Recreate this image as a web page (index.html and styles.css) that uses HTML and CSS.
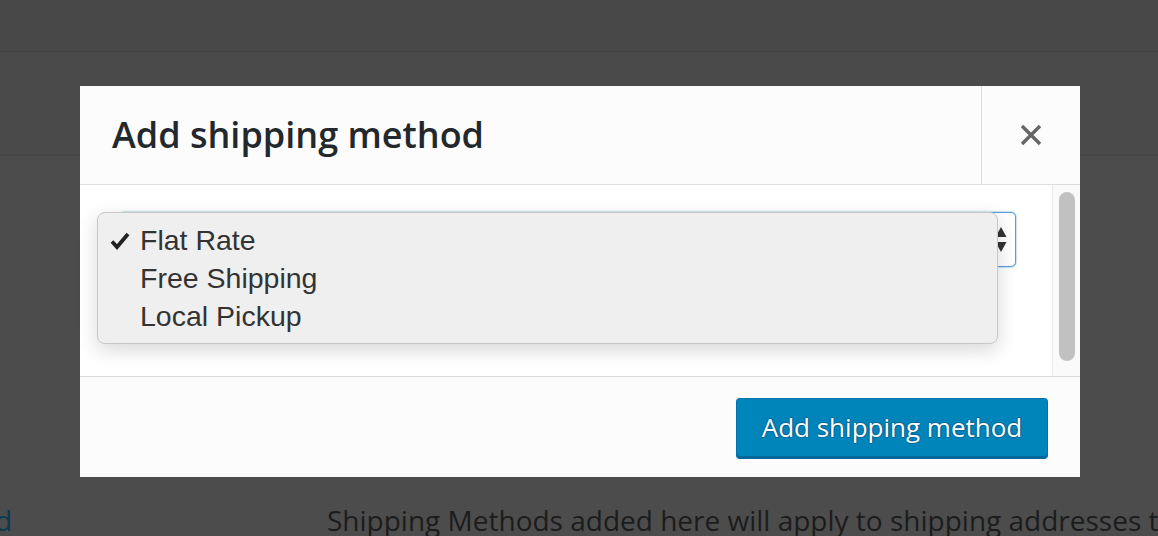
FILE: index.html
```html
<!DOCTYPE html>
<html>
<head>
<meta charset="utf-8">
<link rel="stylesheet" href="styles.css">
</head>
<body>
<div class="page">
  <div class="topbar"></div>
  <div class="subbar"></div>
  <div class="content">
    <a class="link">d</a>
    <p class="desc">Shipping Methods added here will apply to shipping addresses t</p>
  </div>
</div>

<div class="modal">
  <header class="modal-head">
    <h1 class="modal-title">Add shipping method</h1>
    <button class="modal-close" aria-label="Close">
      <svg width="24" height="24" viewBox="0 0 24 24"><path d="M3 3 L21 21 M21 3 L3 21" stroke="#666" stroke-width="3.4" fill="none"/></svg>
    </button>
  </header>
  <div class="modal-body">
    <div class="body-inner">
      <div class="select">
        <span class="arrows">
          <svg width="12" height="28" viewBox="0 0 12 28"><path d="M6 1 L11.5 11 L0.5 11 Z M0.5 16 L11.5 16 L6 26 Z" fill="#333"/></svg>
        </span>
      </div>
      <ul class="dropdown">
        <li class="opt checked"><span class="check"><svg width="20" height="18" viewBox="0 0 20 18"><path d="M2 9.5 L7 15 L18 2" stroke="#222" stroke-width="3.8" fill="none" stroke-linejoin="miter"/></svg></span>Flat Rate</li>
        <li class="opt">Free Shipping</li>
        <li class="opt">Local Pickup</li>
      </ul>
    </div>
    <div class="scrolltrack"><div class="thumb"></div></div>
  </div>
  <footer class="modal-foot">
    <button class="btn-primary">Add shipping method</button>
  </footer>
</div>
</body>
</html>
```
FILE: styles.css
```css
html, body {
  margin: 0;
  padding: 0;
}
body {
  background: #4c4c4c;
  width: 1158px;
  height: 536px;
  overflow: hidden;
  font-family: "Open Sans", "Liberation Sans", sans-serif;
}
.page {
  display: flex;
  flex-direction: column;
}
.topbar {
  height: 51px;
  background: #484848;
  border-bottom: 1px solid #434343;
}
.subbar {
  height: 102px;
  background: #4a4a4a;
  border-bottom: 2px solid #464646;
}
.content {
  display: flex;
  align-items: flex-start;
  padding-top: 344px;
  white-space: nowrap;
  overflow: hidden;
}
.link {
  width: 327px;
  flex: none;
  color: #0b3a4f;
  font-size: 28px;
  line-height: 40px;
  margin-left: -5px;
}
.desc {
  margin: 0;
  color: #1c1c1c;
  font-size: 28px;
  line-height: 40px;
  margin-left: 5px;
}

.modal {
  position: absolute;
  left: 80px;
  top: 86px;
  width: 1000px;
  height: 391px;
  background: #fcfcfc;
  display: flex;
  flex-direction: column;
}
.modal-head {
  height: 98px;
  display: flex;
  border-bottom: 1px solid #dddddd;
  flex: none;
}
.modal-title {
  flex: 1;
  margin: 0;
  padding-left: 32px;
  font-size: 36px;
  font-weight: 600;
  color: #23282d;
  line-height: 98px;
}
.modal-close {
  width: 99px;
  border: 0;
  border-left: 1px solid #dddddd;
  background: transparent;
  display: flex;
  align-items: center;
  justify-content: center;
  padding: 0;
}
.modal-close svg {
  display: block;
  margin-top: -1px;
}
.modal-body {
  flex: 1;
  display: flex;
  background: #ffffff;
  border-bottom: 1px solid #dddddd;
}
.body-inner {
  flex: 1;
  position: relative;
  padding: 27px 36px 0 40px;
}
.select {
  height: 53px;
  border: 1px solid #5b9dd9;
  border-radius: 5px;
  box-shadow: 0 0 2px rgba(30, 140, 190, 0.8);
  background: #fff;
  display: flex;
  align-items: center;
  justify-content: flex-end;
  padding-right: 8px;
}
.arrows svg {
  display: block;
}
.dropdown {
  position: absolute;
  left: 17px;
  top: 27px;
  width: 899px;
  margin: 0;
  padding: 8px 0;
  list-style: none;
  background: #efefef;
  border: 1px solid #c8c8c8;
  border-radius: 8px;
  box-shadow: 0 6px 20px rgba(0, 0, 0, 0.16);
  font-family: "Liberation Sans", Arial, sans-serif;
  font-size: 28.5px;
  color: #333333;
}
.opt {
  height: 38px;
  line-height: 38px;
  padding-left: 42px;
  position: relative;
}
.check {
  position: absolute;
  left: 12px;
  top: 11px;
}
.check svg {
  display: block;
}
.scrolltrack {
  width: 28px;
  border-left: 1px solid #e8e8e8;
  background: #fafafa;
  flex: none;
  padding: 7px 0 0 6px;
  box-sizing: border-box;
}
.thumb {
  width: 16px;
  height: 169px;
  border-radius: 8px;
  background: #c1c1c1;
}
.modal-foot {
  height: 100px;
  flex: none;
  display: flex;
  justify-content: flex-end;
  align-items: flex-start;
  padding: 21px 32px 0 0;
  box-sizing: border-box;
}
.btn-primary {
  width: 312px;
  height: 61px;
  background: #0085ba;
  border: 1px solid #0073aa;
  border-bottom-color: #006799;
  border-radius: 4px;
  box-shadow: inset 0 -2px 0 #006799;
  color: #ffffff;
  font-family: "Open Sans", sans-serif;
  font-size: 26px;
  text-shadow: 0 -1px 1px #006799, 1px 0 1px #006799, 0 1px 1px #006799, -1px 0 1px #006799;
  padding: 0 0 4px;
}
```
